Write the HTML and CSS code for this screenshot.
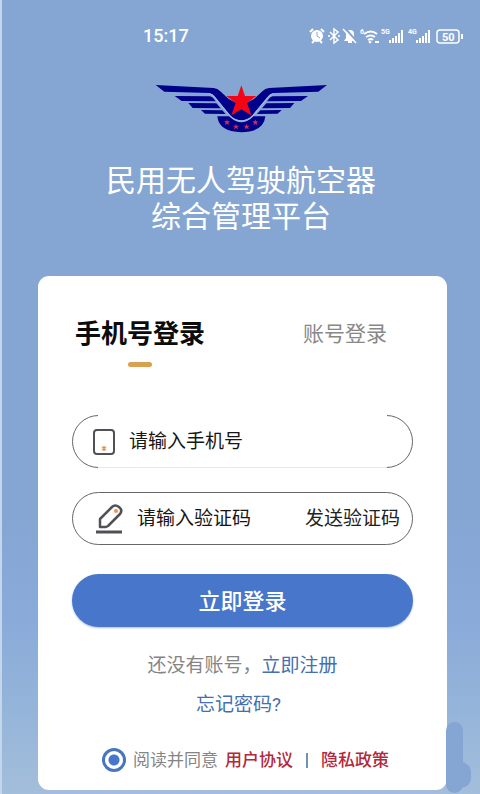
FILE: index.html
```html
<!DOCTYPE html>
<html lang="zh-CN">
<head>
    <meta charset="UTF-8">
    <meta name="viewport" content="width=device-width, initial-scale=1.0">
    <title>民用无人驾驶航空器综合管理平台</title>
    <link rel="stylesheet" href="styles.css">
</head>
<body>

    <div class="status-bar">
        <span class="time">15:17</span>
        <svg class="status-icons" viewBox="0 0 156 18" width="156" height="18" fill="none" stroke="#fff">
            <!-- alarm -->
            <circle cx="9" cy="9" r="6" fill="#fff" stroke="none"/>
            <path d="M2 5l3-3M16 5l-3-3M4 16l2-2M14 16l-2-2" stroke-width="2"/>
            <path d="M9 5v4l3 2" stroke="#85a6d3" stroke-width="1"/>
            <!-- bluetooth -->
            <path d="M22 5l8 8-4 3V2l4 3-8 8M20 9h2M30 9h2" stroke-width="1.5"/>
            <!-- muted bell -->
            <path d="M36 14l2-3V7q0-4 4-4t4 4v4l2 3z" fill="#fff" stroke="none"/>
            <path d="M40 15h4" stroke-width="2"/>
            <path d="M37 1l12 14" stroke="#85a6d3" stroke-width="2"/>
            <path d="M35 2l13 14" stroke-width="1.5"/>
            <!-- wifi -->
            <path d="M56 7q7-5 13 0M58 10q5-3 9 0M60 13q3-2 5 0" stroke-width="2"/>
            <circle cx="62" cy="15" r="1" fill="#fff"/>
            <path d="M67 15h4" stroke-width="2"/>
            <!-- signal bars -->
            <path d="M82 16v-3M85 16v-5M88 16V9M91 16V6M94 16V3" stroke-width="2"/>
            <path d="M109 16v-3M112 16v-5M115 16V9M118 16V6M121 16V3" stroke-width="2"/>
            <!-- battery -->
            <rect x="129" y="3" width="22" height="13" rx="3" stroke-width="1.5"/>
            <path d="M154 7v5" stroke-width="2"/>
            <g class="status-text">
                <text x="52" y="7">6</text>
                <text x="73" y="7">5G</text>
                <text x="100" y="7">4G</text>
                <text class="battery" x="134" y="14">50</text>
            </g>
        </svg>
    </div>

    <header class="brand">
        <svg class="logo" viewBox="0 0 570 195" width="190" height="65">
            <path d="M214 124h36q18 18 36 18t36-18h36q-4 46-72 48-68-2-72-48z" fill="#00008b"/>
            <g id="wing" fill="#00008b">
                <path d="M29 30l174 9q12 1 19 9l26 24 39 20v44q-20 0-33-13l-48-58q-6-9-16-11l-135-4z"/>
                <path d="M86 63l106 1q6 1 10 6l7 9-102-1z"/>
                <path d="M127 84l84 1 13 15-84-1z"/>
                <path d="M165 105l64 1 10 11-62-1z"/>
            </g>
            <use href="#wing" transform="matrix(-1 0 0 1 572 0)"/>
            <path d="M190 57q9 1 15 9l48 58q14 14 33 14t33-14l48-58q6-8 15-9" fill="none" stroke="#9cb6e0" stroke-width="4"/>
            <path d="M286 31l11 32h34l-28 21 13 37-30-18-30 18 13-37-28-21h34z" fill="#f50514"/>
            <g fill="#d62c4c">
                <path d="M243 133l2 6h7l-5 4 2 7-6-4-6 4 2-7-5-4h7z"/>
                <path d="M270 146l2 6h7l-5 4 2 7-6-4-6 4 2-7-5-4h7z"/>
                <path d="M302 146l2 6h7l-5 4 2 7-6-4-6 4 2-7-5-4h7z"/>
                <path d="M328 133l2 6h7l-5 4 2 7-6-4-6 4 2-7-5-4h7z"/>
            </g>
        </svg>
        <h1>民用无人驾驶航空器<br>综合管理平台</h1>
    </header>

    <main class="login-card">
        <div class="tabs">
            <button type="button" class="tab active">手机号登录</button>
            <button type="button" class="tab">账号登录</button>
        </div>

        <form id="loginForm">
            <div class="input-group phone-group">
                <label for="phone" aria-label="手机号">
                    <svg viewBox="0 0 24 28" width="24" height="28">
                        <rect x="2" y="2" width="20" height="24" rx="3" fill="none" stroke="#505056" stroke-width="2"/>
                        <path d="M12 18v5M10 19l4 3M14 19l-4 3" stroke="#f0924a" stroke-width="1.5"/>
                    </svg>
                </label>
                <input type="tel" id="phone" placeholder="请输入手机号">
            </div>

            <div class="input-group code-group">
                <label for="code" aria-label="验证码">
                    <svg viewBox="0 0 28 30" width="28" height="30" fill="none" stroke="#505056">
                        <path d="M5 23v-8L17 3q3-3 7 0t1 7L13 22l-2 1z" stroke-width="2.5" stroke-linejoin="round"/>
                        <path d="M1 28h26" stroke-width="3"/>
                        <circle cx="21" cy="7" r="2" fill="#f0924a" stroke="none"/>
                    </svg>
                </label>
                <input type="text" id="code" placeholder="请输入验证码">
                <button type="button" class="send-btn">发送验证码</button>
            </div>

            <button type="submit" class="login-btn">立即登录</button>

            <p class="register">还没有账号，<a href="#">立即注册</a></p>
            <p class="forgot"><a href="#">忘记密码?</a></p>

            <div class="agreement">
                <input type="radio" id="agree" checked>
                <label for="agree">阅读并同意</label>
                <a href="#">用户协议</a>
                <span class="divider"></span>
                <a href="#">隐私政策</a>
            </div>
        </form>
    </main>

</body>
</html>
```

FILE: styles.css
```css
* {
    margin: 0;
    padding: 0;
    box-sizing: border-box;
    font-family: Roboto, 'Noto Sans CJK SC', sans-serif;
}

body {
    position: relative;
    min-height: 100vh;
    padding-bottom: 4px;
    border-left: 2px solid #c3d6ee;
    background: linear-gradient(to bottom, #85a6d3 65%, #8aabd9 78%, #93b3d9 88%, #a3bedb 100%);
}

/* soft cloud in the bottom right corner */
body::before,
body::after {
    content: "";
    position: absolute;
    background: #85a6d3;
}

body::before {
    right: 17px;
    bottom: 1px;
    width: 17px;
    height: 71px;
    border-radius: 9px;
}

body::after {
    right: 9px;
    bottom: 6px;
    width: 20px;
    height: 26px;
    border-radius: 10px;
}

button {
    border: none;
    background: none;
    cursor: pointer;
}

a {
    text-decoration: none;
}

.status-bar {
    display: flex;
    align-items: center;
    justify-content: space-between;
    padding: 24px 16px 0 141px;
    color: white;
}

.time {
    font-size: 18px;
    font-weight: 500;
    line-height: 24px;
}

.status-text {
    fill: white;
    stroke: none;
    font-size: 7px;
    font-weight: bold;
}

.status-text .battery {
    font-size: 11px;
}

.brand {
    display: flex;
    flex-direction: column;
    align-items: center;
    padding-top: 27px;
}

.brand h1 {
    margin-top: 23px;
    color: white;
    font-size: 30px;
    font-weight: 400;
    line-height: 36px;
    text-align: center;
}

.logo {
    display: block;
}

.login-card {
    margin: 41px 33px 0 36px;
    padding: 38px 34px 18px;
    border-radius: 11px;
    background: white;
}

.tabs {
    display: flex;
    align-items: flex-start;
    justify-content: space-between;
    padding: 0 26px 0 3px;
}

.tab {
    color: #888;
    font-size: 21px;
    line-height: 40px;
}

.tab.active {
    color: #0c0c0c;
    font-size: 26px;
    font-weight: bold;
}

.tab.active::after {
    content: "";
    display: block;
    width: 24px;
    height: 5px;
    margin: 8px auto 0;
    border-radius: 3px;
    background: #d9a04f;
}

.input-group {
    display: flex;
    align-items: center;
    position: relative;
    height: 53px;
    margin-top: 24px;
    border: 1px solid #666;
    border-radius: 27px;
}

.input-group label {
    display: flex;
}

.input-group input {
    flex: 1;
    min-width: 0;
    border: none;
    outline: none;
    background: none;
    color: #161616;
    font-size: 19px;
    line-height: 28px;
}

.input-group input::placeholder {
    color: #161616;
    opacity: 1;
}

.phone-group {
    gap: 13px;
    margin-top: 48px;
    padding: 0 19px;
}

/* straight edges are faint, only the round ends stay dark */
.phone-group::after {
    content: "";
    position: absolute;
    inset: -1px 25px;
    border-top: 1px solid white;
    border-bottom: 1px solid #e8e8e8;
    pointer-events: none;
}

.code-group {
    gap: 14px;
    padding: 0 12px 0 22px;
}

.send-btn {
    color: #222;
    font-size: 19px;
    line-height: 28px;
}

.login-btn {
    display: block;
    width: 100%;
    height: 53px;
    margin-top: 29px;
    padding-bottom: 4px;
    border-radius: 27px;
    background: #4776cb;
    color: white;
    font-size: 22px;
    font-weight: 500;
    box-shadow: 0 1px 2px #a9c2ee;
}

.register,
.forgot {
    color: #858585;
    font-size: 19px;
    line-height: 28px;
    text-align: center;
}

.register {
    margin-top: 25px;
}

.forgot {
    margin-top: 11px;
    padding-right: 8px;
}

.register a,
.forgot a {
    color: #456fae;
}

.agreement {
    display: flex;
    align-items: center;
    justify-content: center;
    gap: 7px;
    margin-top: 29px;
    padding-left: 6px;
    color: #858585;
    font-size: 17px;
    line-height: 24px;
}

.agreement input {
    appearance: none;
    width: 24px;
    height: 24px;
    border: 3px solid #4776bd;
    border-radius: 50%;
    background: radial-gradient(circle, #4776cb 5px, white 6px);
}

.agreement a {
    color: #b3283c;
    font-weight: 500;
}

.divider {
    width: 2px;
    height: 15px;
    margin: 0 6px;
    background: #6f93b5;
}
```
